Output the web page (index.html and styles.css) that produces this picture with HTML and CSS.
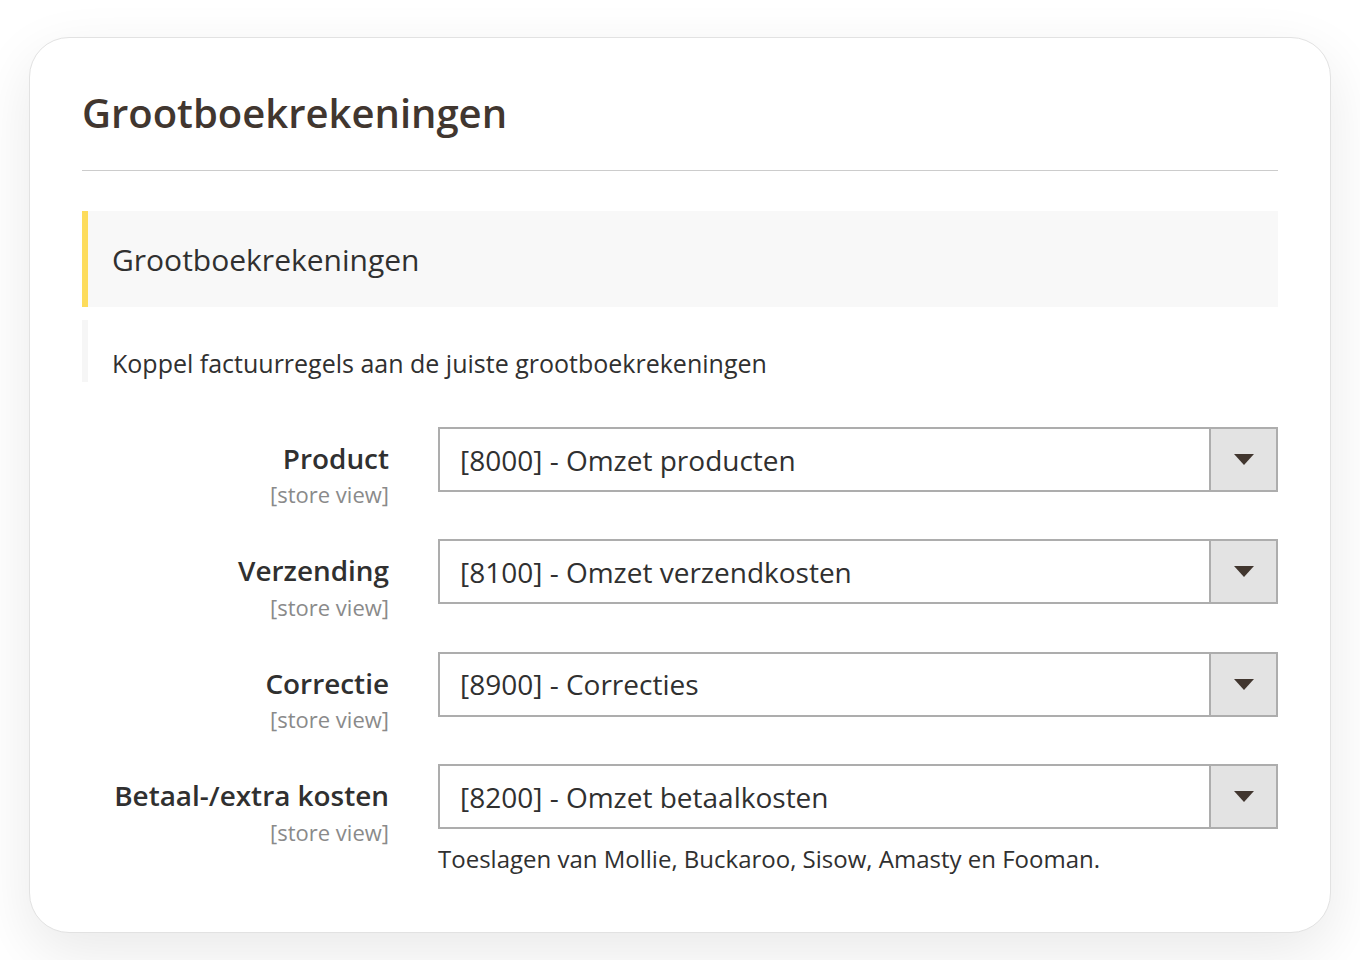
FILE: index.html
```html
<!DOCTYPE html>
<html lang="nl">
<head>
<meta charset="utf-8">
<title>Grootboekrekeningen</title>
<link rel="stylesheet" href="styles.css">
</head>
<body>
<div class="card">
  <h1 class="page-title">Grootboekrekeningen</h1>
  <div class="section-head">Grootboekrekeningen</div>
  <div class="section-desc">Koppel factuurregels aan de juiste grootboekrekeningen</div>
  <div class="fields">
    <div class="row">
      <div class="label"><div class="label-text">Product</div><div class="scope">[store view]</div></div>
      <div class="control">
        <div class="select"><span class="select-value">[8000] - Omzet producten</span><span class="select-btn"><span class="arrow"></span></span></div>
      </div>
    </div>
    <div class="row">
      <div class="label"><div class="label-text">Verzending</div><div class="scope">[store view]</div></div>
      <div class="control">
        <div class="select"><span class="select-value">[8100] - Omzet verzendkosten</span><span class="select-btn"><span class="arrow"></span></span></div>
      </div>
    </div>
    <div class="row">
      <div class="label"><div class="label-text">Correctie</div><div class="scope">[store view]</div></div>
      <div class="control">
        <div class="select"><span class="select-value">[8900] - Correcties</span><span class="select-btn"><span class="arrow"></span></span></div>
      </div>
    </div>
    <div class="row">
      <div class="label"><div class="label-text">Betaal-/extra kosten</div><div class="scope">[store view]</div></div>
      <div class="control">
        <div class="select"><span class="select-value">[8200] - Omzet betaalkosten</span><span class="select-btn"><span class="arrow"></span></span></div>
        <div class="note">Toeslagen van Mollie, Buckaroo, Sisow, Amasty en Fooman.</div>
      </div>
    </div>
  </div>
</div>
</body>
</html>
```

FILE: styles.css
```css
html, body {
  margin: 0;
  padding: 0;
  background: #ffffff;
}
body {
  font-family: "Open Sans", "Liberation Sans", sans-serif;
  color: #303030;
  padding: 37px 29px 27px 29px;
  min-height: 960px;
  box-sizing: border-box;
}
.card {
  width: 1302px;
  height: 896px;
  box-sizing: border-box;
  border: 1.5px solid #e2e2e2;
  border-radius: 40px;
  background: #ffffff;
  box-shadow: 0 20px 60px rgba(0, 0, 0, 0.09);
  padding: 51px 52px 0 52px;
}
.page-title {
  margin: 0;
  font-size: 40px;
  font-weight: 600;
  line-height: 48px;
  color: #41362f;
  padding-bottom: 33px;
  border-bottom: 1px solid #cccccc;
}
.section-head {
  margin-top: 40px;
  height: 96px;
  box-sizing: border-box;
  background: #f8f8f8;
  border-left: 6px solid #fddc5c;
  padding-left: 24px;
  display: flex;
  align-items: center;
  font-size: 30px;
  font-weight: 400;
  color: #303030;
}
.section-desc {
  margin-top: 13px;
  border-left: 6px solid #f6f6f6;
  padding: 26px 0 0 24px;
  height: 62px;
  box-sizing: border-box;
  font-size: 25px;
  line-height: 34px;
  color: #303030;
  white-space: nowrap;
}
.fields {
  margin-top: 45px;
  display: flex;
  flex-direction: column;
  gap: 31.3px;
}
.row {
  display: grid;
  grid-template-columns: 307px 840px;
  column-gap: 49px;
}
.label {
  text-align: right;
  padding-top: 13.6px;
}
.label-text {
  font-size: 27.9px;
  font-weight: 600;
  line-height: 34px;
  color: #303030;
  white-space: nowrap;
}
.scope {
  margin-top: 5.6px;
  font-size: 22px;
  line-height: 28px;
  color: #8a8a8a;
}
.select {
  height: 65px;
  box-sizing: border-box;
  border: 2px solid #adadad;
  display: flex;
  align-items: stretch;
  background: #ffffff;
}
.select-value {
  flex: 1;
  display: flex;
  align-items: center;
  padding-left: 20px;
  font-size: 28px;
  color: #303030;
  white-space: nowrap;
}
.select-btn {
  width: 65px;
  background: #e3e3e3;
  border-left: 2px solid #adadad;
  display: flex;
  align-items: center;
  justify-content: center;
}
.arrow {
  width: 0;
  height: 0;
  border-left: 10px solid transparent;
  border-right: 10px solid transparent;
  border-top: 11px solid #41362f;
}
.note {
  margin-top: 14px;
  font-size: 24px;
  line-height: 32px;
  color: #303030;
  white-space: nowrap;
}
```
